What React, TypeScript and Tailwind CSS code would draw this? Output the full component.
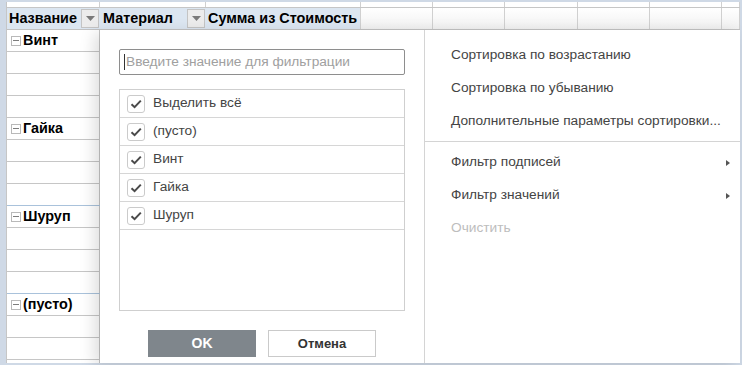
import React from "react";

const colW = [93, 106, 155, 72, 72, 73, 72, 72, 18];

function DropBtn() {
  return (
    <div className="w-[18px] h-[19px] bg-[#ececec] border border-[#c4c4c4] flex items-center justify-center shrink-0">
      <svg width="9" height="5" viewBox="0 0 9 5">
        <path d="M0 0 L9 0 L4.5 5 Z" fill="#7a7a7a" />
      </svg>
    </div>
  );
}

function Minus() {
  return (
    <div className="w-[10px] h-[10px] border border-[#b9b9b9] bg-white flex items-center justify-center shrink-0">
      <div className="w-[6px] h-[1px] bg-[#7d7d7d]" />
    </div>
  );
}

function Check() {
  return (
    <div className="w-[18px] h-[18px] border border-[#cbcbcb] rounded-[3px] bg-white flex items-center justify-center shrink-0">
      <svg width="12" height="10" viewBox="0 0 12 10">
        <path d="M1.5 5.2 L4.6 8.2 L10.8 1.6" fill="none" stroke="#4a4a4a" strokeWidth="2" />
      </svg>
    </div>
  );
}

function Arrow() {
  return (
    <svg width="4" height="6" viewBox="0 0 4 6">
      <path d="M0 0 L4 3 L0 6 Z" fill="#555" />
    </svg>
  );
}

const groups: Record<number, string> = { 0: "Винт", 4: "Гайка", 8: "Шуруп", 12: "(пусто)" };
const blueLine: Record<number, boolean> = { 7: true, 11: true };

export default function App() {
  const rows = Array.from({ length: 16 }, (_, i) => i);
  return (
    <div
      className="relative w-[742px] h-[365px] bg-[#cfd9e6] pt-[2px] pl-[6px] pr-[2px] pb-[2px] overflow-hidden"
      style={{ fontFamily: '"Liberation Sans", Arial, sans-serif' }}
    >
      <div className="w-[734px] h-[361px] bg-white border-l border-[#c6c6c6] overflow-hidden flex flex-col">
        {/* top partial row */}
        <div className="flex h-[6px] border-b border-[#c6c6c6] shrink-0">
          {colW.map((w, i) => (
            <div key={i} style={{ width: w }} className="h-full border-r border-[#d0d0d0] shrink-0" />
          ))}
        </div>
        {/* header row */}
        <div className="flex h-[22px] border-b border-[#c2c2c2] shrink-0 text-[14.4px] font-bold text-black">
          <div className="w-[93px] h-full bg-[#dce6f1] flex items-center justify-between pl-[2px] pr-[1px] shrink-0">
            <span>Название</span>
            <DropBtn />
          </div>
          <div className="w-[106px] h-full bg-[#dce6f1] flex items-center justify-between pl-[3px] pr-[1px] shrink-0">
            <span>Материал</span>
            <DropBtn />
          </div>
          <div className="w-[155px] h-full bg-[#dce6f1] border-r border-[#d0d0d0] flex items-center pl-[2px] shrink-0">
            <span>Сумма из Стоимость</span>
          </div>
          {colW.slice(3).map((w, i) => (
            <div
              key={i}
              style={{ width: w }}
              className="h-full border-r border-[#d0d0d0] bg-gradient-to-b from-white to-[#f1f1f1] shrink-0"
            />
          ))}
        </div>
        {/* body rows */}
        {rows.map((r) => (
          <div
            key={r}
            className={`flex h-[22px] shrink-0 border-b ${blueLine[r] ? "border-[#a9c2db]" : "border-[#c6c6c6]"}`}
          >
            <div className="w-[93px] h-full border-r border-[#c6c6c6] flex items-center gap-[2px] pl-[4px] shrink-0 text-[14.4px] font-bold text-black">
              {groups[r] !== undefined && (
                <>
                  <Minus />
                  <span>{groups[r]}</span>
                </>
              )}
            </div>
            <div className="flex-1" />
          </div>
        ))}
      </div>

      {/* filter popup */}
      <div className="absolute left-[100px] top-[30px] w-[640px] h-[333px] bg-white flex shadow-[-6px_3px_14px_rgba(0,0,0,0.13)] text-[13.7px]">
        <div className="w-[325px] h-full border-r border-[#d4d4d4] pt-[19px] px-[19px] flex flex-col">
          <div className="w-[286px] h-[26px] border border-[#8e8e8e] rounded-[2px] flex items-center pl-[4px]">
            <div className="w-[1px] h-[16px] bg-[#333]" />
            <span className="text-[#a0a0a0] ml-[1px]">Введите значение для фильтрации</span>
          </div>
          <div className="mt-[14px] w-[286px] h-[222px] border border-[#cfcfcf] flex flex-col">
            {["Выделить всё", "(пусто)", "Винт", "Гайка", "Шуруп"].map((t) => (
              <div key={t} className="h-[28px] border-b border-[#d6d6d6] flex items-center pl-[7px] gap-[8px] shrink-0">
                <Check />
                <span className="text-[#444]">{t}</span>
              </div>
            ))}
          </div>
          <div className="mt-[19px] flex justify-center gap-[12px]">
            <div className="w-[108px] h-[27px] bg-[#7f868c] flex items-center justify-center text-white font-bold text-[14px]">
              OK
            </div>
            <div className="w-[108px] h-[27px] bg-white border border-[#cacaca] flex items-center justify-center text-[#333] font-bold text-[13px]">
              Отмена
            </div>
          </div>
        </div>
        <div className="flex-1 pt-[9px] flex flex-col text-[#444]">
          {["Сортировка по возрастанию", "Сортировка по убыванию", "Дополнительные параметры сортировки..."].map((t) => (
            <div key={t} className="h-[33px] flex items-center pl-[26px]">
              {t}
            </div>
          ))}
          <div className="mt-[3px] mb-[4px] h-[1px] bg-[#d4d4d4]" />
          {["Фильтр подписей", "Фильтр значений"].map((t) => (
            <div key={t} className="h-[33px] flex items-center justify-between pl-[26px] pr-[10px]">
              <span>{t}</span>
              <Arrow />
            </div>
          ))}
          <div className="h-[33px] flex items-center pl-[26px] text-[#bdbdbd]">Очистить</div>
        </div>
      </div>
    </div>
  );
}
